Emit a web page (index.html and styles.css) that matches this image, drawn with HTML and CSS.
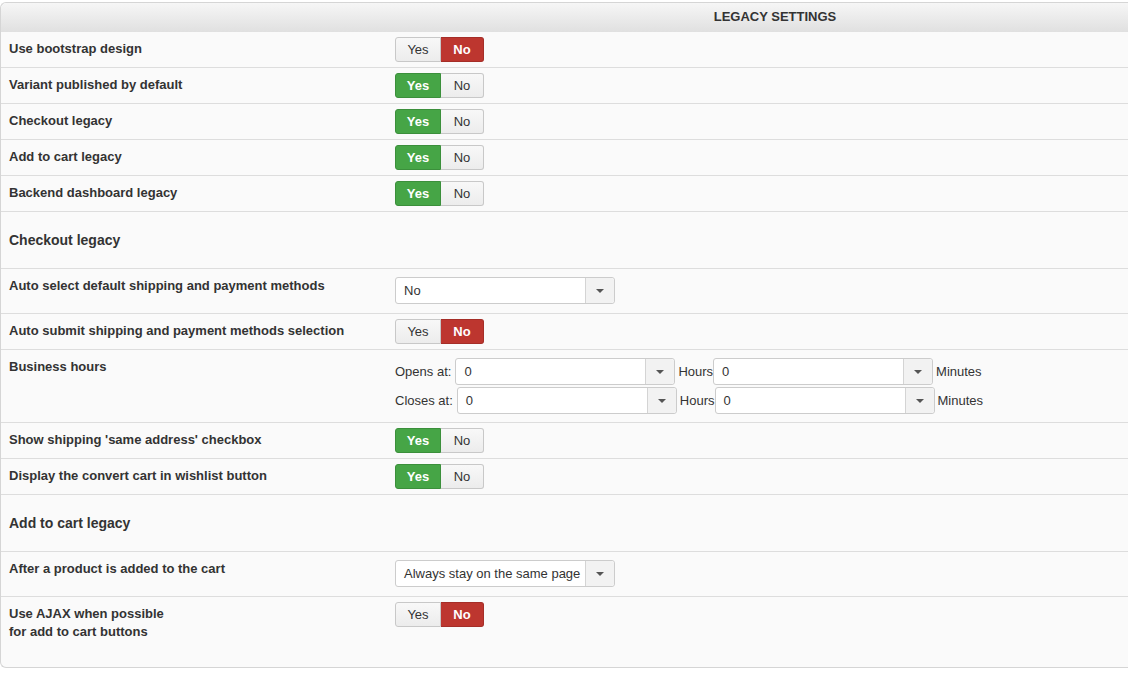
FILE: index.html
```html
<!DOCTYPE html>
<html>
<head>
	<title>Legacy settings</title>
	<link rel="stylesheet" href="styles.css">
</head>
<body>

<div class="panel">
	<div class="panel-head">Legacy settings</div>

	<div class="row">
		<div class="label">Use bootstrap design</div>
		<div class="ctrl"><div class="toggle"><span class="yes">Yes</span><span class="no on-no">No</span></div></div>
	</div>
	<div class="row">
		<div class="label">Variant published by default</div>
		<div class="ctrl"><div class="toggle"><span class="yes on-yes">Yes</span><span class="no">No</span></div></div>
	</div>
	<div class="row">
		<div class="label">Checkout legacy</div>
		<div class="ctrl"><div class="toggle"><span class="yes on-yes">Yes</span><span class="no">No</span></div></div>
	</div>
	<div class="row">
		<div class="label">Add to cart legacy</div>
		<div class="ctrl"><div class="toggle"><span class="yes on-yes">Yes</span><span class="no">No</span></div></div>
	</div>
	<div class="row">
		<div class="label">Backend dashboard legacy</div>
		<div class="ctrl"><div class="toggle"><span class="yes on-yes">Yes</span><span class="no">No</span></div></div>
	</div>

	<div class="row heading">Checkout legacy</div>

	<div class="row row-select">
		<div class="label">Auto select default shipping and payment methods</div>
		<div class="ctrl"><div class="select"><span class="val">No</span><span class="arrow"></span></div></div>
	</div>
	<div class="row">
		<div class="label">Auto submit shipping and payment methods selection</div>
		<div class="ctrl"><div class="toggle"><span class="yes">Yes</span><span class="no on-no">No</span></div></div>
	</div>
	<div class="row row-hours">
		<div class="label">Business hours</div>
		<div class="ctrl hours">
			<div class="hours-line">
				<span class="txt">Opens at:</span>
				<div class="select"><span class="val">0</span><span class="arrow"></span></div>
				<span class="txt unit">Hours</span>
				<div class="select"><span class="val">0</span><span class="arrow"></span></div>
				<span class="txt">Minutes</span>
			</div>
			<div class="hours-line">
				<span class="txt">Closes at:</span>
				<div class="select"><span class="val">0</span><span class="arrow"></span></div>
				<span class="txt unit">Hours</span>
				<div class="select"><span class="val">0</span><span class="arrow"></span></div>
				<span class="txt">Minutes</span>
			</div>
		</div>
	</div>
	<div class="row">
		<div class="label">Show shipping 'same address' checkbox</div>
		<div class="ctrl"><div class="toggle"><span class="yes on-yes">Yes</span><span class="no">No</span></div></div>
	</div>
	<div class="row">
		<div class="label">Display the convert cart in wishlist button</div>
		<div class="ctrl"><div class="toggle"><span class="yes on-yes">Yes</span><span class="no">No</span></div></div>
	</div>

	<div class="row heading">Add to cart legacy</div>

	<div class="row row-select">
		<div class="label">After a product is added to the cart</div>
		<div class="ctrl"><div class="select"><span class="val">Always stay on the same page</span><span class="arrow"></span></div></div>
	</div>
	<div class="row row-last">
		<div class="label">Use AJAX when possible<br>for add to cart buttons</div>
		<div class="ctrl"><div class="toggle"><span class="yes">Yes</span><span class="no on-no">No</span></div></div>
	</div>
</div>

</body>
</html>
```

FILE: styles.css
```css
html, body {
	margin: 0;
	padding: 0;
}

body {
	background: #fff;
	font-family: "Liberation Sans", Arial, sans-serif;
	font-size: 13px;
	color: #333;
}

.panel {
	margin-top: 2px;
	border: 1px solid #d5d5d5;
	border-right: none;
	border-radius: 6px 0 0 6px;
	background: #fafafa;
}

.panel-head {
	height: 29px;
	line-height: 28px;
	padding-left: 421px;
	text-align: center;
	text-transform: uppercase;
	font-weight: bold;
	border-radius: 6px 0 0 0;
	background: linear-gradient(#f6f6f6, #e0e0e0);
}

.row {
	display: flex;
	box-sizing: border-box;
	height: 36px;
	padding-top: 5px;
	border-bottom: 1px solid #ddd;
}

.row-select {
	height: 45px;
}

.row-hours {
	height: 73px;
}

.row-last {
	height: 70px;
	border-bottom: none;
}

.row.heading {
	height: 57px;
	padding: 0 0 0 8px;
	align-items: center;
	font-size: 14px;
	font-weight: bold;
}

.label {
	width: 394px;
	box-sizing: border-box;
	padding: 3px 0 0 8px;
	line-height: 18px;
	font-weight: bold;
}

.toggle {
	display: flex;
	height: 25px;
	line-height: 23px;
}

.toggle span {
	box-sizing: border-box;
	text-align: center;
	border: 1px solid #c8c8c8;
	background: linear-gradient(#f8f8f8, #ececec);
}

.toggle .yes {
	width: 46px;
	border-radius: 3px 0 0 3px;
}

.toggle .no {
	width: 43px;
	border-left: none;
	border-radius: 0 3px 3px 0;
}

.toggle .on-yes {
	background: #46a546;
	border-color: #3b8f3b;
	color: #fff;
	font-weight: bold;
}

.toggle .on-no {
	background: #bd362f;
	border-color: #a52e28;
	color: #fff;
	font-weight: bold;
}

.select {
	display: flex;
	width: 220px;
	height: 27px;
	margin-top: 3px;
	box-sizing: border-box;
	border: 1px solid #ccc;
	border-radius: 3px;
	background: #fff;
	line-height: 25px;
}

.select .val {
	flex: 1;
	padding-left: 8px;
	white-space: nowrap;
}

.select .arrow {
	width: 28px;
	border-left: 1px solid #d4d4d4;
	background: #f2f2f2;
	border-radius: 0 3px 3px 0;
	position: relative;
}

.select .arrow::after {
	content: "";
	position: absolute;
	left: 10px;
	top: 11px;
	border-top: 4px solid #555;
	border-left: 4px solid transparent;
	border-right: 4px solid transparent;
}

.hours-line {
	display: flex;
	align-items: flex-start;
	margin-bottom: -1px;
}

.hours-line .txt {
	margin-top: 3px;
	line-height: 27px;
	padding-right: 4px;
}

.hours-line .txt.unit {
	padding-right: 0;
}

.hours-line .select + .txt {
	padding-left: 3px;
}
```
